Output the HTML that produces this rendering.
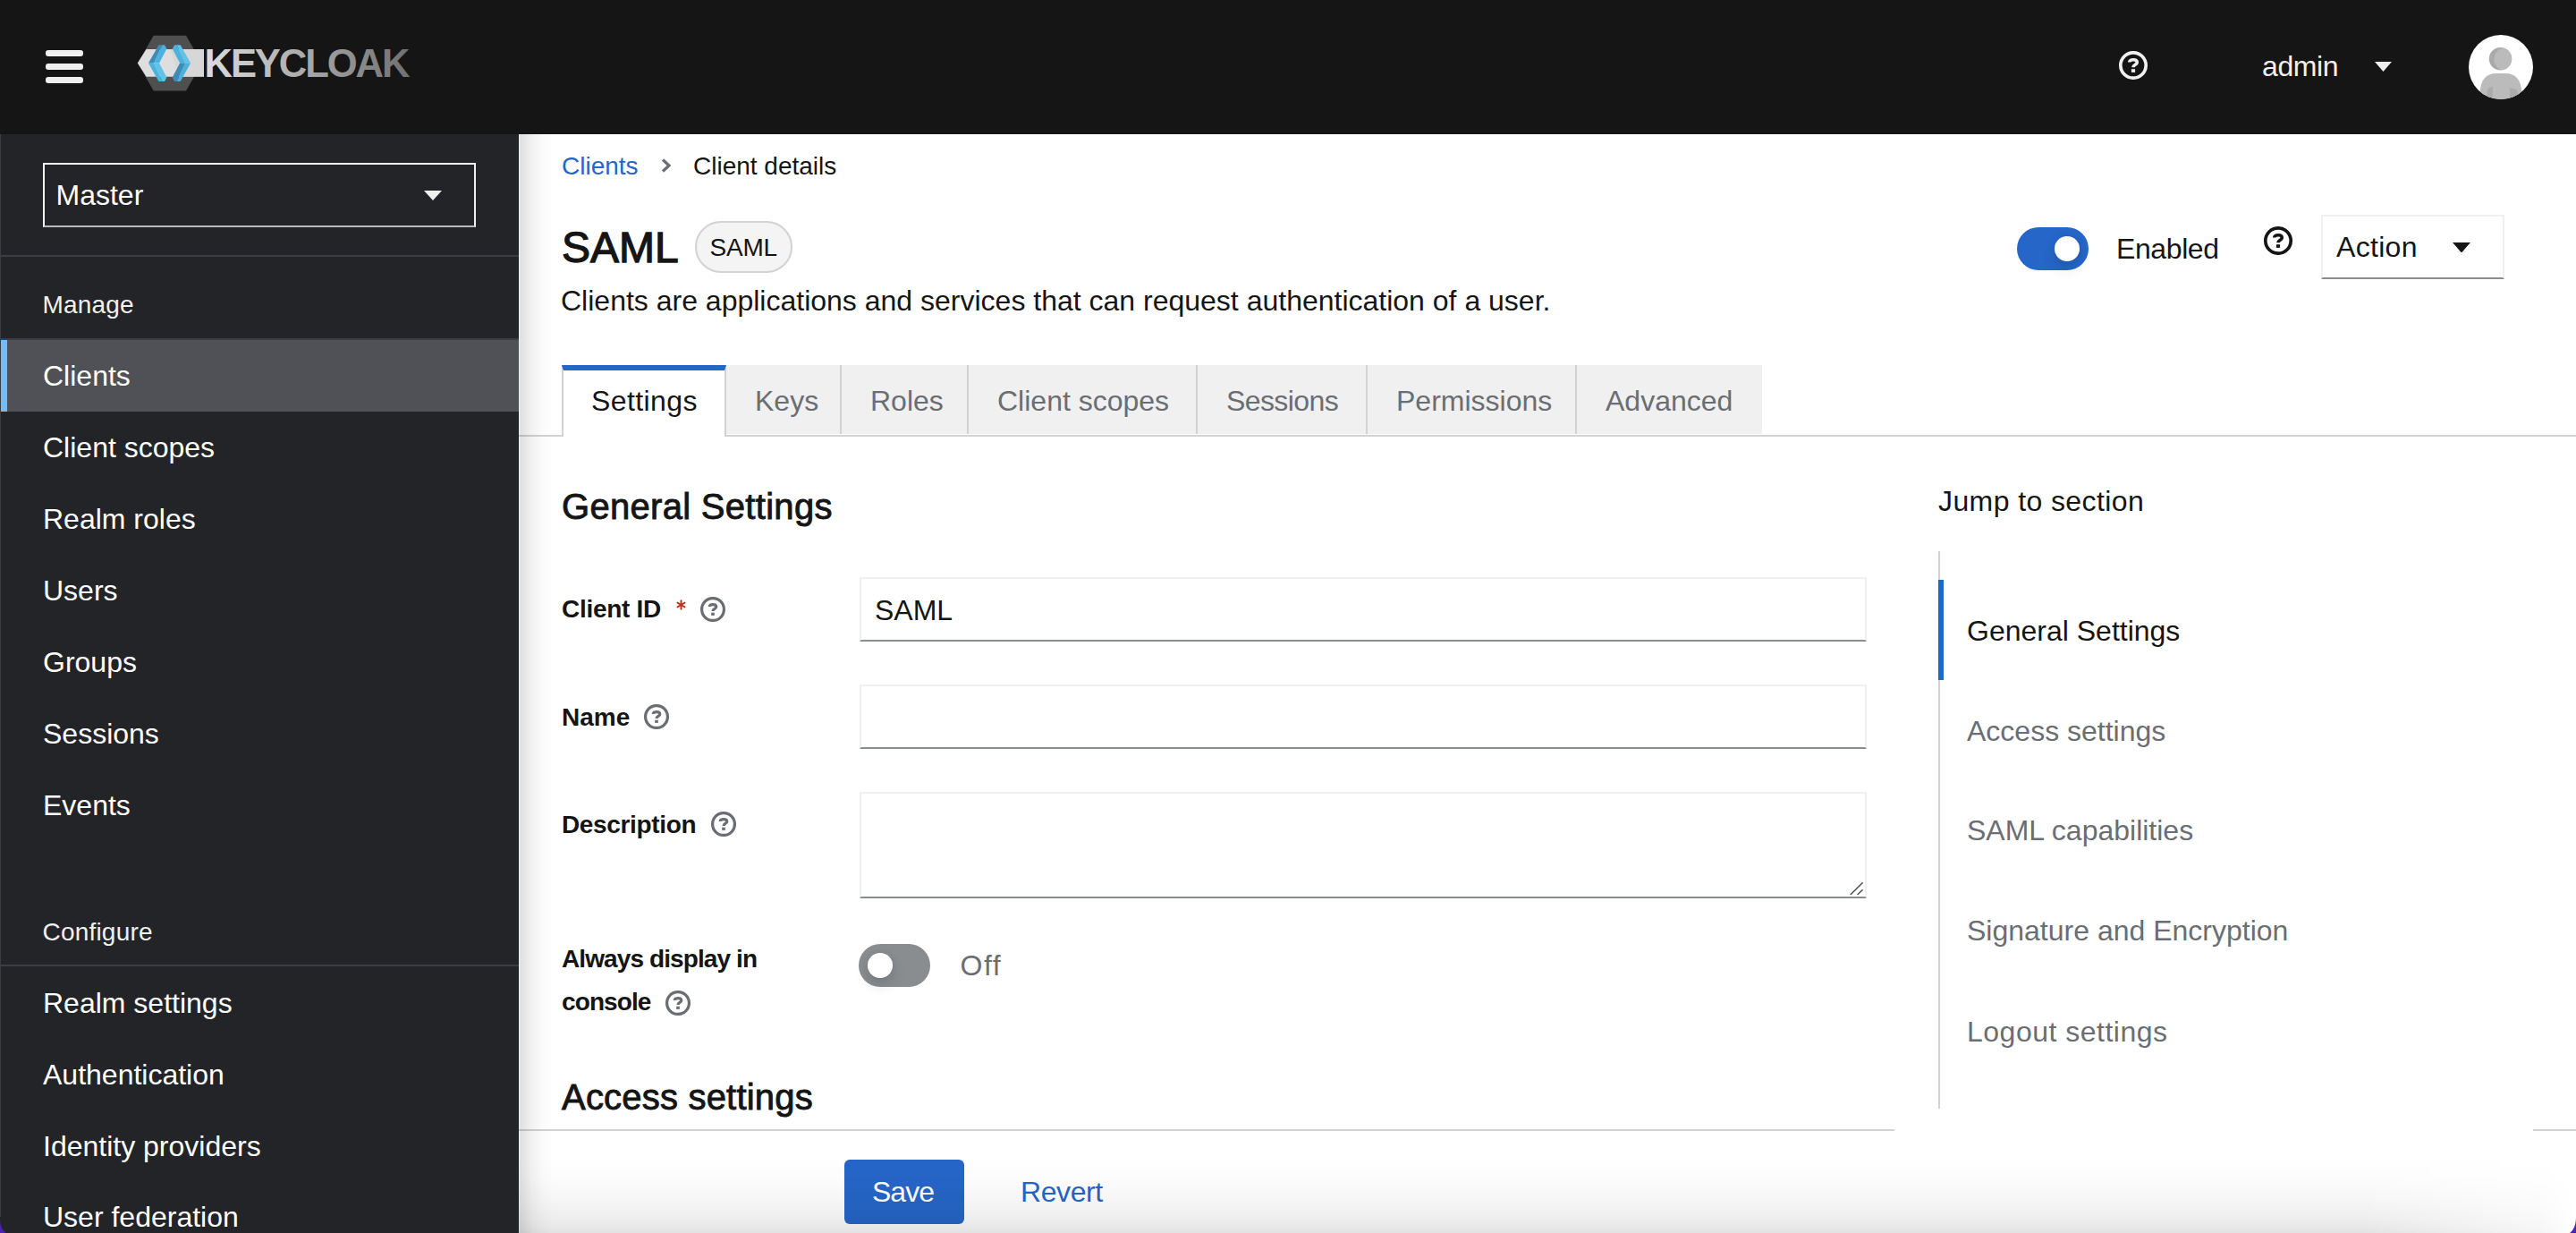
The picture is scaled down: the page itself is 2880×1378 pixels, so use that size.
<!DOCTYPE html>
<html><head><meta charset="utf-8">
<style>
html,body{margin:0;padding:0;}
body{width:2880px;height:1378px;overflow:hidden;background:#fff;font-family:"Liberation Sans",sans-serif;}
#root{position:relative;width:2880px;height:1378px;overflow:hidden;}
.a{position:absolute;white-space:nowrap;line-height:1;}
.hdr{position:absolute;left:0;top:0;width:2880px;height:150px;background:#151515;}
.side{position:absolute;left:0;top:150px;width:580px;height:1228px;background:#232428;}
.main{position:absolute;left:580px;top:150px;width:2300px;height:1228px;background:#fff;}
.bar{position:absolute;left:51px;width:42px;height:7px;border-radius:3px;background:#f0f0f0;}
.nav{position:absolute;left:0;width:580px;height:80px;}
.nav span{position:absolute;left:48px;top:23.5px;font-size:32px;line-height:1;color:#fff;}
.sect{font-size:28px;color:#f0f0f0;}
.t32{font-size:32px;}
.t28{font-size:28px;}
.tab{position:absolute;top:408px;height:77px;background:#f0f0f0;border-right:2px solid #d2d2d2;box-sizing:border-box;}
.tab span{position:absolute;left:32px;top:24px;font-size:32px;line-height:1;color:#6a6e73;white-space:nowrap;}
.lbl{font-size:28px;font-weight:bold;color:#151515;}
.inp{position:absolute;left:961px;width:1126px;box-sizing:border-box;border:2px solid #f0f0f0;border-bottom-color:#8a8d90;background:#fff;}
.jl{position:absolute;left:2199px;font-size:32px;line-height:1;color:#6a6e73;white-space:nowrap;}
</style></head>
<body><div id="root">

<!-- HEADER -->
<div class="hdr"></div>
<div class="bar" style="top:56px"></div>
<div class="bar" style="top:71px"></div>
<div class="bar" style="top:86px"></div>
<svg class="a" style="left:150px;top:36px" width="312" height="70" viewBox="150 36 312 70">
  <defs>
    <linearGradient id="kg" x1="231" y1="0" x2="457" y2="0" gradientUnits="userSpaceOnUse">
      <stop offset="0" stop-color="#dcdcdc"/><stop offset="0.5" stop-color="#a8a8a8"/><stop offset="1" stop-color="#707070"/>
    </linearGradient>
  </defs>
  <polygon points="154,70.6 171.7,39.8 208,39.8 225.7,70.6 208,101.4 171.7,101.4" fill="#4f4f4f"/>
  <polygon points="163.6,54.9 228,54.9 228,85.8 163.6,85.8 153.8,70.5" fill="#dedede"/>
  <polygon points="190,54.9 228,54.9 228,85.8 200,85.8" fill="#d2d2d2" opacity="0.6"/>
  <polygon points="166,70.5 177.4,50.3 181.5,50.3 172,70.5" fill="#3c8cb6"/>
  <polygon points="172,70.5 181.5,50.3 184,50.3 186.4,54.6 178,70.5" fill="#4ab2de"/>
  <polygon points="166,70.5 172,70.5 181.5,90.9 177.4,90.9" fill="#4ab2de"/>
  <polygon points="172,70.5 178,70.5 186.4,86.4 184,90.9 181.5,90.9" fill="#62c2e7"/>
  <polygon points="213.1,70.5 201.7,50.3 197.6,50.3 207.1,70.5" fill="#62c2e7"/>
  <polygon points="207.1,70.5 197.6,50.3 195.1,50.3 192.7,54.6 201.1,70.5" fill="#4ab2de"/>
  <polygon points="213.1,70.5 207.1,70.5 197.6,90.9 201.7,90.9" fill="#4ab2de"/>
  <polygon points="207.1,70.5 201.1,70.5 192.7,86.4 195.1,90.9 197.6,90.9" fill="#3c8cb6"/>
  <text x="228.5" y="86.4" font-family="Liberation Sans" font-weight="bold" font-size="43.6" letter-spacing="-2.1" fill="url(#kg)">KEYCLOAK</text>
</svg>
<svg class="a" style="left:2369px;top:57px" width="32" height="32" viewBox="0 0 32 32"><circle cx="16" cy="16" r="14.18" fill="none" stroke="#f0f0f0" stroke-width="3.65"/><path d="M11.7 12.6C11.7 10.8 13.5 9.8 16 9.8C18.6 9.8 20.3 11 20.3 12.8C20.3 15.3 16 15.2 16 18.2" fill="none" stroke="#f0f0f0" stroke-width="3.6"/><rect x="13.9" y="20.2" width="4.2" height="3.7" fill="#f0f0f0"/></svg>
<div class="a t32" style="left:2529px;top:58.1px;color:#f0f0f0;letter-spacing:-0.4px">admin</div>
<svg class="a" style="left:2655px;top:69px" width="19" height="11" viewBox="0 0 19 11"><polygon points="0,0 19,0 9.5,11" fill="#f0f0f0"/></svg>
<svg class="a" style="left:2760px;top:38.5px" width="72" height="72" viewBox="0 0 72 72">
  <defs><clipPath id="avc"><circle cx="36" cy="36" r="36"/></clipPath></defs>
  <circle cx="36" cy="36" r="36" fill="#fff"/>
  <g clip-path="url(#avc)">
    <circle cx="35.5" cy="26.75" r="12.7" fill="#aaa"/>
    <clipPath id="hdc"><circle cx="35.5" cy="26.75" r="12.7"/></clipPath><circle cx="41.3" cy="27.2" r="12.9" fill="#bbb" clip-path="url(#hdc)"/>
    <path d="M12.8 74 L12.8 64 C13 51 19 42.9 31 42.9 L41 42.9 C53 42.9 59 51 59.2 64 L59.2 74 Z" fill="#bbb"/>
    <path d="M20.6 74 L20.6 64 C20.6 60 23 58.3 26.8 58 L26.8 74 Z" fill="#ababab"/>
    <path d="M46 74 L46 59.5 C51 59.3 54.7 61 54.7 64 L54.7 74 Z" fill="#ababab"/>
  </g>
</svg>

<!-- SIDEBAR -->
<div class="side"></div>
<div class="a" style="left:48px;top:182px;width:484px;height:72px;box-sizing:border-box;border:2px solid #f0f0f0;border-bottom-color:#b8bbbe"></div>
<div class="a t32" style="left:62.5px;top:201.5px;color:#fff">Master</div>
<svg class="a" style="left:474px;top:213px" width="20" height="11" viewBox="0 0 20 11"><polygon points="0,0 20,0 10,11" fill="#f0f0f0"/></svg>
<div class="a" style="left:0;top:285px;width:580px;height:2px;background:#3c3d42"></div>
<div class="a sect" style="left:47.5px;top:327px;letter-spacing:0.2px">Manage</div>
<div class="a" style="left:0;top:378px;width:580px;height:2px;background:#3c3d42"></div>
<div class="nav" style="top:380px;background:#505156"><div style="position:absolute;left:0;top:0;width:8px;height:80px;background:#73bcf7"></div><span>Clients</span></div>
<div class="nav" style="top:460px"><span>Client scopes</span></div>
<div class="nav" style="top:540px"><span>Realm roles</span></div>
<div class="nav" style="top:620px"><span>Users</span></div>
<div class="nav" style="top:700px"><span>Groups</span></div>
<div class="nav" style="top:780px"><span>Sessions</span></div>
<div class="nav" style="top:860px"><span>Events</span></div>
<div class="a sect" style="left:47.5px;top:1027.5px;letter-spacing:0.2px">Configure</div>
<div class="a" style="left:0;top:1078px;width:580px;height:2px;background:#3c3d42"></div>
<div class="nav" style="top:1081px"><span>Realm settings</span></div>
<div class="nav" style="top:1161px"><span>Authentication</span></div>
<div class="nav" style="top:1241px"><span>Identity providers</span></div>
<div class="nav" style="top:1320px"><span>User federation</span></div>

<!-- MAIN -->
<div class="main"></div>
<div class="a t28" style="left:628px;top:172px;color:#2666c8">Clients</div>
<svg class="a" style="left:739px;top:177px" width="12" height="16" viewBox="0 0 12 16"><path d="M2 1.5 L9 8 L2 14.5" fill="none" stroke="#6a6e73" stroke-width="3.2"/></svg>
<div class="a t28" style="left:775px;top:172px;color:#151515">Client details</div>
<div class="a" style="left:628px;top:252.8px;font-size:48px;color:#151515;letter-spacing:0px;-webkit-text-stroke:1.3px #151515">SAML</div>
<div class="a" style="left:777px;top:247px;width:109px;height:58px;box-sizing:border-box;border:2px solid #d2d2d2;border-radius:29px;background:#f4f4f4"></div>
<div class="a t28" style="left:793.5px;top:263.3px;color:#151515;letter-spacing:-0.2px">SAML</div>
<div class="a t32" style="left:627px;top:320.4px;color:#151515">Clients are applications and services that can request authentication of a user.</div>

<div class="a" style="left:2255px;top:254px;width:80px;height:48px;border-radius:24px;background:#2666c8"></div>
<div class="a" style="left:2297px;top:264px;width:28px;height:28px;border-radius:50%;background:#fff;box-shadow:0 8px 16px rgba(3,3,3,0.12),0 0 8px rgba(3,3,3,0.06)"></div>
<div class="a t32" style="left:2366px;top:262.1px;color:#151515;letter-spacing:-0.4px">Enabled</div>
<svg class="a" style="left:2531px;top:253px" width="32" height="32" viewBox="0 0 32 32"><circle cx="16" cy="16" r="14.18" fill="none" stroke="#151515" stroke-width="3.65"/><path d="M11.7 12.6C11.7 10.8 13.5 9.8 16 9.8C18.6 9.8 20.3 11 20.3 12.8C20.3 15.3 16 15.2 16 18.2" fill="none" stroke="#151515" stroke-width="3.6"/><rect x="13.9" y="20.2" width="4.2" height="3.7" fill="#151515"/></svg>
<div class="a" style="left:2595px;top:240px;width:205px;height:72px;box-sizing:border-box;border:2px solid #f0f0f0;border-bottom-color:#8a8d90"></div>
<div class="a t32" style="left:2612px;top:259.9px;color:#151515;letter-spacing:0.3px">Action</div>
<svg class="a" style="left:2742px;top:270.5px" width="20" height="11.5" viewBox="0 0 20 11.5"><polygon points="0,0 20,0 10,11.5" fill="#151515"/></svg>

<!-- TABS -->
<div class="a" style="left:580px;top:486px;width:2300px;height:2px;background:#d2d2d2"></div>
<div class="a" style="left:628px;top:408px;width:184px;height:80px;background:#fff;box-sizing:border-box;border-top:6px solid #2666c8;border-left:2px solid #d2d2d2;border-right:2px solid #d2d2d2"></div>
<div class="a t32" style="left:661px;top:432px;color:#151515;letter-spacing:0.4px">Settings</div>
<div class="tab" style="left:812px;width:129px"><span>Keys</span></div>
<div class="tab" style="left:941px;width:142px"><span>Roles</span></div>
<div class="tab" style="left:1083px;width:256px"><span>Client scopes</span></div>
<div class="tab" style="left:1339px;width:190px"><span style="letter-spacing:-0.6px">Sessions</span></div>
<div class="tab" style="left:1529px;width:234px"><span>Permissions</span></div>
<div class="tab" style="left:1763px;width:207px;border-right:none"><span>Advanced</span></div>

<!-- FORM -->
<div class="a" style="left:628px;top:546.1px;font-size:40px;color:#151515;letter-spacing:0.3px;-webkit-text-stroke:0.9px #151515">General Settings</div>

<div class="a lbl" style="left:628px;top:667.3px;letter-spacing:-0.3px">Client ID</div>
<svg class="a" style="left:756px;top:670px" width="11" height="12" viewBox="0 0 11 12"><g stroke="#c42a1c" stroke-width="1.9"><path d="M5.5 0.5V11.5"/><path d="M0.7 3.2L10.3 8.8"/><path d="M0.7 8.8L10.3 3.2"/></g></svg>
<svg class="a" style="left:783px;top:667px" width="28" height="28" viewBox="0 0 32 32"><circle cx="16" cy="16" r="14.18" fill="none" stroke="#6a6e73" stroke-width="3.65"/><path d="M11.7 12.6C11.7 10.8 13.5 9.8 16 9.8C18.6 9.8 20.3 11 20.3 12.8C20.3 15.3 16 15.2 16 18.2" fill="none" stroke="#6a6e73" stroke-width="3.6"/><rect x="13.9" y="20.2" width="4.2" height="3.7" fill="#6a6e73"/></svg>
<div class="inp" style="top:645px;height:72px"></div>
<div class="a t32" style="left:978px;top:665.5px;color:#151515">SAML</div>

<div class="a lbl" style="left:628px;top:787.6px">Name</div>
<svg class="a" style="left:720px;top:787px" width="28" height="28" viewBox="0 0 32 32"><circle cx="16" cy="16" r="14.18" fill="none" stroke="#6a6e73" stroke-width="3.65"/><path d="M11.7 12.6C11.7 10.8 13.5 9.8 16 9.8C18.6 9.8 20.3 11 20.3 12.8C20.3 15.3 16 15.2 16 18.2" fill="none" stroke="#6a6e73" stroke-width="3.6"/><rect x="13.9" y="20.2" width="4.2" height="3.7" fill="#6a6e73"/></svg>
<div class="inp" style="top:765px;height:72px"></div>

<div class="a lbl" style="left:628px;top:908px;letter-spacing:-0.35px">Description</div>
<svg class="a" style="left:795px;top:907px" width="28" height="28" viewBox="0 0 32 32"><circle cx="16" cy="16" r="14.18" fill="none" stroke="#6a6e73" stroke-width="3.65"/><path d="M11.7 12.6C11.7 10.8 13.5 9.8 16 9.8C18.6 9.8 20.3 11 20.3 12.8C20.3 15.3 16 15.2 16 18.2" fill="none" stroke="#6a6e73" stroke-width="3.6"/><rect x="13.9" y="20.2" width="4.2" height="3.7" fill="#6a6e73"/></svg>
<div class="inp" style="top:885px;height:119px"></div>
<svg class="a" style="left:2066px;top:982px" width="18" height="20" viewBox="0 0 18 20"><path d="M16.2 4.8 L3.2 17.5 M16.2 12.8 L11.1 17.5" stroke="#4d4d4d" stroke-width="1.5" stroke-linecap="round"/></svg>

<div class="a lbl" style="left:628px;top:1058.3px;letter-spacing:-0.9px">Always display in</div>
<div class="a lbl" style="left:628px;top:1105.9px;letter-spacing:-0.9px">console</div>
<svg class="a" style="left:744px;top:1107px" width="28" height="28" viewBox="0 0 32 32"><circle cx="16" cy="16" r="14.18" fill="none" stroke="#6a6e73" stroke-width="3.65"/><path d="M11.7 12.6C11.7 10.8 13.5 9.8 16 9.8C18.6 9.8 20.3 11 20.3 12.8C20.3 15.3 16 15.2 16 18.2" fill="none" stroke="#6a6e73" stroke-width="3.6"/><rect x="13.9" y="20.2" width="4.2" height="3.7" fill="#6a6e73"/></svg>
<div class="a" style="left:960px;top:1055px;width:80px;height:48px;border-radius:24px;background:#8a8d90"></div>
<div class="a" style="left:970px;top:1065px;width:28px;height:28px;border-radius:50%;background:#fff;box-shadow:0 8px 16px rgba(3,3,3,0.12),0 0 8px rgba(3,3,3,0.06)"></div>
<div class="a t32" style="left:1073.5px;top:1062.9px;color:#6a6e73;letter-spacing:1.5px">Off</div>

<div class="a" style="left:628px;top:1205.6px;font-size:40px;color:#151515;letter-spacing:0.2px;-webkit-text-stroke:0.9px #151515">Access settings</div>

<!-- JUMP LINKS -->
<div class="a t32" style="left:2167px;top:544.1px;color:#151515;letter-spacing:0.4px">Jump to section</div>
<div class="a" style="left:2167px;top:616px;width:2px;height:623px;background:#d2d2d2"></div>
<div class="a" style="left:2167px;top:648px;width:6px;height:112px;background:#2666c8"></div>
<div class="jl" style="top:688.6px;color:#151515">General Settings</div>
<div class="jl" style="top:800.5px">Access settings</div>
<div class="jl" style="top:911.8px">SAML capabilities</div>
<div class="jl" style="top:1023.5px">Signature and Encryption</div>
<div class="jl" style="top:1136.5px;letter-spacing:0.5px">Logout settings</div>

<!-- FOOTER -->
<div class="a" style="left:580px;top:1262px;width:1538px;height:2px;background:#d2d2d2"></div>
<div class="a" style="left:2832px;top:1262px;width:48px;height:2px;background:#d2d2d2"></div>
<div class="a" style="left:580px;top:1264px;width:2300px;height:114px;background:#fff"></div>
<div class="a" style="left:944px;top:1296px;width:134px;height:72px;border-radius:6px;background:#2666c8"></div>
<div class="a t32" style="left:975px;top:1315.9px;color:#fff;letter-spacing:-1px">Save</div>
<div class="a t32" style="left:1141px;top:1315.9px;color:#2666c8;letter-spacing:-0.4px">Revert</div>
<div class="a" style="left:580px;top:1292px;width:2300px;height:86px;background:linear-gradient(to bottom,rgba(0,0,0,0),rgba(0,0,0,0.01) 30%,rgba(0,0,0,0.04) 60%,rgba(0,0,0,0.075) 85%,rgba(0,0,0,0.11));-webkit-mask-image:linear-gradient(to right,#000 0,#000 2060px,rgba(0,0,0,0.35) 2260px,rgba(0,0,0,0) 2300px)"></div>

<!-- sidebar shadow on main -->
<div class="a" style="left:580px;top:150px;width:48px;height:1228px;background:linear-gradient(to right,rgba(0,0,0,0.07),rgba(0,0,0,0.12) 2px,rgba(0,0,0,0.05) 15px,rgba(0,0,0,0.015) 27px,rgba(0,0,0,0) 40px)"></div>

<svg class="a" style="left:2860px;top:1356px" width="20" height="22" viewBox="0 0 20 22"><path d="M20 4 C20 12 18 18 13 22 L20 22 Z" fill="#4a22b4"/></svg>
<svg class="a" style="left:0;top:1356px" width="20" height="22" viewBox="0 0 20 22"><path d="M0 6 C0 13 2 19 7 22 L0 22 Z" fill="#4a22b4"/></svg>
<div class="a" style="left:0;top:150px;width:1px;height:1210px;background:#3a3c40"></div>
</div></body></html>
